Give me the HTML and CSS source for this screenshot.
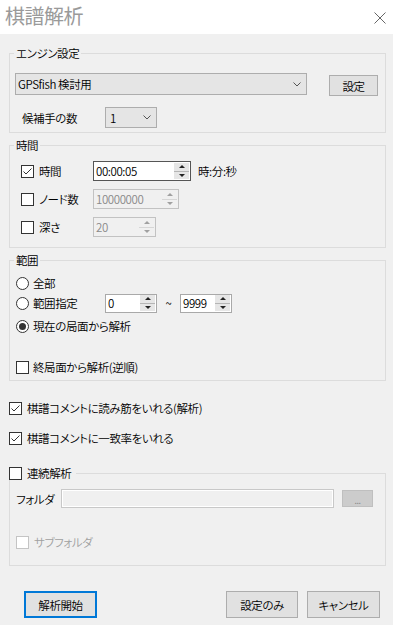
FILE: index.html
```html
<!DOCTYPE html>
<html lang="ja">
<head>
    <meta charset="UTF-8">
    <meta name="viewport" content="width=device-width, initial-scale=1.0">
    <title>棋譜解析</title>
    <link rel="stylesheet" href="styles.css">
</head>
<body>
    <div class="window">
        <!-- タイトルバー -->
        <div class="titlebar">
            <span class="title">棋譜解析</span>
            <span class="close">
                <svg width="12" height="12" viewBox="0 0 12 12"><path d="M0.5 0.5 L11.5 11.5 M11.5 0.5 L0.5 11.5" stroke="#666" stroke-width="1" fill="none"/></svg>
            </span>
        </div>

        <div class="content">
            <!-- エンジン設定 -->
            <fieldset class="group engine">
                <legend>エンジン設定</legend>
                <div class="row engine-row">
                    <div class="combo combo-wide">
                        <span>GPSfish 検討用</span>
                        <svg class="chevron" width="8" height="5" viewBox="0 0 8 5"><path d="M0.5 0.5 L4 4 L7.5 0.5" stroke="#555" fill="none"/></svg>
                    </div>
                    <button class="btn btn-setting">設定</button>
                </div>
                <div class="row candidate-row">
                    <span class="label candidate-label">候補手の数</span>
                    <div class="combo combo-narrow">
                        <span>1</span>
                        <svg class="chevron" width="8" height="5" viewBox="0 0 8 5"><path d="M0.5 0.5 L4 4 L7.5 0.5" stroke="#555" fill="none"/></svg>
                    </div>
                </div>
            </fieldset>

            <!-- 時間 -->
            <fieldset class="group time">
                <legend>時間</legend>
                <div class="row time-row">
                    <span class="check-label">
                        <span class="box"><svg width="11" height="11" viewBox="0 0 11 11"><path d="M1.5 5.5 L4 8 L9.5 2.5" stroke="#333" fill="none"/></svg></span>
                        時間
                    </span>
                    <div class="spinbox focused w-time">
                        <span class="value">00:00:05</span>
                        <span class="spin"><span class="up"></span><span class="down"></span></span>
                    </div>
                    <span class="unit">時:分:秒</span>
                </div>
                <div class="row time-row">
                    <span class="check-label">
                        <span class="box"></span>
                        ノード数
                    </span>
                    <div class="spinbox disabled w-node">
                        <span class="value">10000000</span>
                        <span class="spin"><span class="up"></span><span class="down"></span></span>
                    </div>
                </div>
                <div class="row time-row">
                    <span class="check-label">
                        <span class="box"></span>
                        深さ
                    </span>
                    <div class="spinbox disabled w-depth">
                        <span class="value">20</span>
                        <span class="spin"><span class="up"></span><span class="down"></span></span>
                    </div>
                </div>
            </fieldset>

            <!-- 範囲 -->
            <fieldset class="group range">
                <legend>範囲</legend>
                <div class="row radio-row">
                    <span class="radio-label"><span class="radio"></span>全部</span>
                </div>
                <div class="row radio-row range-row">
                    <span class="radio-label"><span class="radio"></span>範囲指定</span>
                    <div class="spinbox w-range">
                        <span class="value">0</span>
                        <span class="spin"><span class="up"></span><span class="down"></span></span>
                    </div>
                    <span class="tilde">~</span>
                    <div class="spinbox w-range">
                        <span class="value">9999</span>
                        <span class="spin"><span class="up"></span><span class="down"></span></span>
                    </div>
                </div>
                <div class="row radio-row current-row">
                    <span class="radio-label"><span class="radio selected"></span>現在の局面から解析</span>
                </div>
                <div class="row reverse-row">
                    <span class="check-label">
                        <span class="box"></span>
                        終局面から解析(逆順)
                    </span>
                </div>
            </fieldset>

            <div class="row comment-row first">
                <span class="check-label">
                    <span class="box"><svg width="11" height="11" viewBox="0 0 11 11"><path d="M1.5 5.5 L4 8 L9.5 2.5" stroke="#333" fill="none"/></svg></span>
                    棋譜コメントに読み筋をいれる(解析)
                </span>
            </div>
            <div class="row comment-row">
                <span class="check-label">
                    <span class="box"><svg width="11" height="11" viewBox="0 0 11 11"><path d="M1.5 5.5 L4 8 L9.5 2.5" stroke="#333" fill="none"/></svg></span>
                    棋譜コメントに一致率をいれる
                </span>
            </div>

            <!-- 連続解析 -->
            <fieldset class="group batch">
                <legend>
                    <span class="check-label">
                        <span class="box"></span>
                        連続解析
                    </span>
                </legend>
                <div class="row folder-row">
                    <span class="label folder-label">フォルダ</span>
                    <div class="folder-input"></div>
                    <button class="btn btn-browse">...</button>
                </div>
                <div class="row sub-row">
                    <span class="check-label disabled">
                        <span class="box"></span>
                        サブフォルダ
                    </span>
                </div>
            </fieldset>

            <div class="actions">
                <button class="btn btn-action default">解析開始</button>
                <button class="btn btn-action push-right">設定のみ</button>
                <button class="btn btn-action">キャンセル</button>
            </div>
        </div>
    </div>
</body>
</html>
```

FILE: styles.css
```css
* {
    box-sizing: border-box;
}

body {
    margin: 0;
    font-family: "Noto Sans CJK JP", "Noto Sans", sans-serif;
    font-size: 11.5px;
    font-weight: 350;
    letter-spacing: -0.4px;
    line-height: 14px;
    color: #000;
    background: #f0f0f0;
    font-feature-settings: "palt";
}

.window {
    width: 393px;
    height: 625px;
    background: #f0f0f0;
    overflow: hidden;
}

.titlebar {
    height: 34px;
    background: #fff;
    display: flex;
    align-items: center;
    justify-content: space-between;
    padding: 0 7px 0 5px;
}

.title {
    font-size: 20px;
    font-weight: 400;
    line-height: 24px;
    color: #9a9a9a;
    letter-spacing: -0.5px;
    margin-top: -2px;
}

.close {
    display: flex;
    margin-top: 1px;
}

.content {
    padding: 12px 7px 0 9px;
}

.row {
    display: flex;
    align-items: center;
}

/* グループボックス */
.group {
    margin: 0;
    border: 1px solid #dcdcdc;
    padding: 0 5px;
    min-width: 0;
}

.group legend {
    padding: 0 2px;
    margin-left: -1px;
    line-height: 14px;
}

.engine {
    padding-top: 13px;
    padding-bottom: 4px;
}

.time {
    margin-top: 5px;
    padding-top: 9px;
    padding-bottom: 10px;
}

.range {
    margin-top: 5px;
    padding-top: 9px;
    padding-bottom: 6px;
}

.batch {
    margin-top: 21px;
    padding-top: 9px;
    padding-bottom: 16px;
}

.batch legend {
    margin-left: -6px;
    padding: 0 5px 0 0;
}

/* コンボボックス・ボタン */
.combo {
    display: flex;
    align-items: center;
    justify-content: space-between;
    background: #e5e5e5;
    border: 1px solid #adadad;
    padding: 0 5px 0 2px;
}

.combo-wide {
    width: 292px;
    height: 22px;
}

.combo-narrow {
    width: 52px;
    height: 21px;
    padding-left: 4px;
}

.engine-row {
    align-items: flex-start;
}

.btn {
    font-family: inherit;
    font-size: inherit;
    font-weight: inherit;
    letter-spacing: inherit;
    font-feature-settings: inherit;
    line-height: 14px;
    color: #000;
    background: #e1e1e1;
    border: 1px solid #adadad;
    border-radius: 0;
    padding: 0;
    margin: 0;
}

.btn-setting {
    width: 49px;
    height: 21px;
    margin-top: 2px;
    margin-left: 22px;
}

.candidate-row {
    margin-top: 11px;
}

.label {
    display: inline-block;
}

.candidate-label {
    width: 85px;
    padding-left: 2px;
    margin-left: 5px;
}

/* チェックボックス・ラジオ */
.check-label {
    display: flex;
    align-items: center;
    gap: 5px;
    white-space: nowrap;
}

.box {
    width: 13px;
    height: 13px;
    border: 1px solid #333;
    background: #fff;
    display: flex;
    flex-shrink: 0;
}

.check-label.disabled {
    color: #a0a0a0;
}

.check-label.disabled .box {
    border-color: #c4c4c4;
}

.radio-label {
    display: flex;
    align-items: center;
    gap: 4px;
    width: 89px;
    margin-left: 1px;
    white-space: nowrap;
}

.radio {
    width: 13px;
    height: 13px;
    border: 1px solid #333;
    border-radius: 50%;
    background: #fff;
    display: flex;
    align-items: center;
    justify-content: center;
    flex-shrink: 0;
}

.radio.selected::after {
    content: "";
    width: 7px;
    height: 7px;
    border-radius: 50%;
    background: #333;
}

/* 時間 */
.time-row {
    height: 20px;
}

.time-row + .time-row {
    margin-top: 8px;
}

.time-row .check-label {
    width: 72px;
    margin-left: 6px;
}

.spinbox {
    display: flex;
    align-items: center;
    justify-content: space-between;
    height: 20px;
    background: #fff;
    border: 1px solid #a9a9a9;
    padding: 0 1px 0 1px;
}

.spinbox .value {
    padding-left: 1px;
}

.spinbox.focused {
    border-color: #555;
}

.spinbox.disabled {
    background: #f0f0f0;
    border-color: #c2c2c2;
    color: #8a8a8a;
}

.w-time {
    width: 98px;
}

.w-node {
    width: 86px;
}

.w-depth {
    width: 63px;
}

.w-range {
    width: 52px;
    height: 19px;
}

.spin {
    width: 15px;
    height: 16px;
    display: flex;
    flex-direction: column;
    background: #e6e6e6;
}

.spin .up,
.spin .down {
    flex: 1;
    display: flex;
    align-items: center;
    justify-content: center;
}

.spin .up {
    border-bottom: 1px solid #b5b5b5;
}

.spin .up::after {
    content: "";
    border-left: 3px solid transparent;
    border-right: 3px solid transparent;
    border-bottom: 3px solid #222;
}

.spin .down::after {
    content: "";
    border-left: 3px solid transparent;
    border-right: 3px solid transparent;
    border-top: 3px solid #222;
}

.disabled .spin {
    background: #f0f0f0;
}

.disabled .spin .up {
    border-bottom-color: #d6d6d6;
}

.disabled .spin .up::after {
    border-bottom-color: #a0a0a0;
}

.disabled .spin .down::after {
    border-top-color: #a0a0a0;
}

.unit {
    margin-left: 7px;
}

/* 範囲 */
.radio-row {
    height: 14px;
}

.range-row {
    height: 20px;
    margin-top: 3px;
}

.current-row {
    margin-top: 6px;
}

.tilde {
    width: 23px;
    text-align: center;
}

.reverse-row {
    margin-top: 27px;
    height: 14px;
}

.reverse-row .check-label {
    margin-left: 1px;
    gap: 4px;
}

/* コメント */
.comment-row {
    height: 14px;
    margin-top: 16px;
}

.comment-row.first {
    margin-top: 20px;
}

/* 連続解析 */
.folder-row {
    height: 19px;
}

.folder-label {
    width: 45px;
    margin-left: 1px;
}

.folder-input {
    width: 273px;
    height: 19px;
    border: 1px solid #c8c8c8;
    box-shadow: inset 0 0 0 1px #fff;
    background: #f0f0f0;
}

.btn-browse {
    width: 31px;
    height: 17px;
    margin-left: 8px;
    background: #cccccc;
    border-color: #bfbfbf;
    color: #8a8a8a;
    font-size: 9px;
    line-height: 9px;
    padding-top: 4px;
}

.sub-row {
    margin-top: 27px;
    height: 14px;
}

.sub-row .check-label {
    margin-left: 1px;
}

/* 下部ボタン */
.actions {
    display: flex;
    margin-top: 25px;
    padding: 0 6px 0 15px;
}

.btn-action {
    width: 73px;
    height: 27px;
}

.btn-action + .btn-action {
    margin-left: 9px;
}

.btn-action.push-right {
    margin-left: auto;
    width: 72px;
}

.btn-action.default {
    border: 2px solid #0078d7;
}
```
